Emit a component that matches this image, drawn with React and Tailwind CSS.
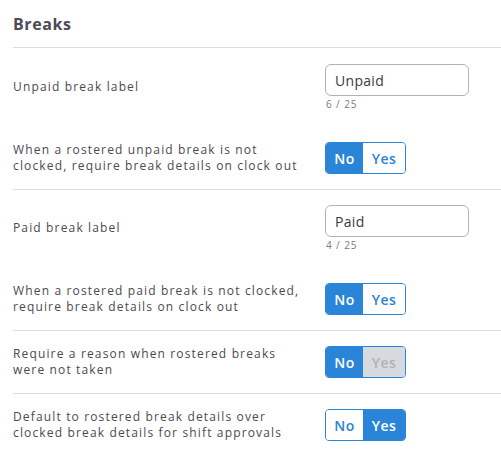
import React from 'react'

const font = { fontFamily: '"Open Sans", "Liberation Sans", sans-serif' }

function Toggle({ value, disabledYes }) {
  const on = 'bg-[#2a84d8] text-white'
  const off = 'bg-white text-[#2a84d8]'
  return (
    <div className="flex h-8 w-[81px] rounded-[4px] border border-[#2a84d8] overflow-hidden text-[14px] font-semibold tracking-[0.5px]">
      <div className={`flex w-[37px] items-center justify-center ${value === 'no' ? on : off}`}>No</div>
      {disabledYes ? (
        <div className="flex flex-1 items-center justify-center bg-[#d6d9dd] text-[#aeb2b8]">Yes</div>
      ) : (
        <div className={`flex flex-1 items-center justify-center ${value === 'yes' ? on : off}`}>Yes</div>
      )}
    </div>
  )
}

function TextField({ value, max }) {
  return (
    <div className="flex flex-col">
      <div className="flex h-[32px] w-[144px] items-center rounded-[6px] border border-[#b0b2ba] px-[9px] text-[14px] font-medium tracking-[0.3px] text-[#3a3a3f]">
        {value}
      </div>
      <div className="pl-[1px] pt-[2px] text-[10px] leading-[12px] tracking-[0.9px] text-[#7a7a80]">
        {value.length} / {max}
      </div>
    </div>
  )
}

function Row({ children, control, pad }) {
  return (
    <div className={`flex items-center ${pad}`}>
      <div className="flex-1 pr-2 text-[12px] leading-[16px] tracking-[1.15px] text-[#4a4a50]">{children}</div>
      <div className="w-[176px]">{control}</div>
    </div>
  )
}

export default function App() {
  return (
    <div className="min-h-[464px] bg-white pl-[13px]" style={font}>
      <div className="border-b border-[#dcdde0] pt-[14px] pb-[13px]">
        <h2 className="text-[16px] font-bold leading-[20px] tracking-[0.6px] text-[#4a4a55]">Breaks</h2>
      </div>

      <div className="border-b border-[#dcdde0]">
        <Row pad="pt-4 pb-4" control={<TextField value="Unpaid" max={25} />}>Unpaid break label</Row>
        <Row pad="pt-4 pb-[15px]" control={<Toggle value="no" />}>
          When a rostered unpaid break is not
          <br />
          clocked, require break details on clock out
        </Row>
      </div>

      <div className="border-b border-[#dcdde0]">
        <Row pad="pt-[15px] pb-4" control={<TextField value="Paid" max={25} />}>Paid break label</Row>
        <Row pad="pt-4 pb-[15px]" control={<Toggle value="no" />}>
          When a rostered paid break is not clocked,
          <br />
          require break details on clock out
        </Row>
      </div>

      <div className="border-b border-[#dcdde0]">
        <Row pad="py-[15px]" control={<Toggle value="no" disabledYes />}>
          Require a reason when rostered breaks
          <br />
          were not taken
        </Row>
      </div>

      <div>
        <Row pad="py-[15px]" control={<Toggle value="yes" />}>
          Default to rostered break details over
          <br />
          clocked break details for shift approvals
        </Row>
      </div>
    </div>
  )
}
